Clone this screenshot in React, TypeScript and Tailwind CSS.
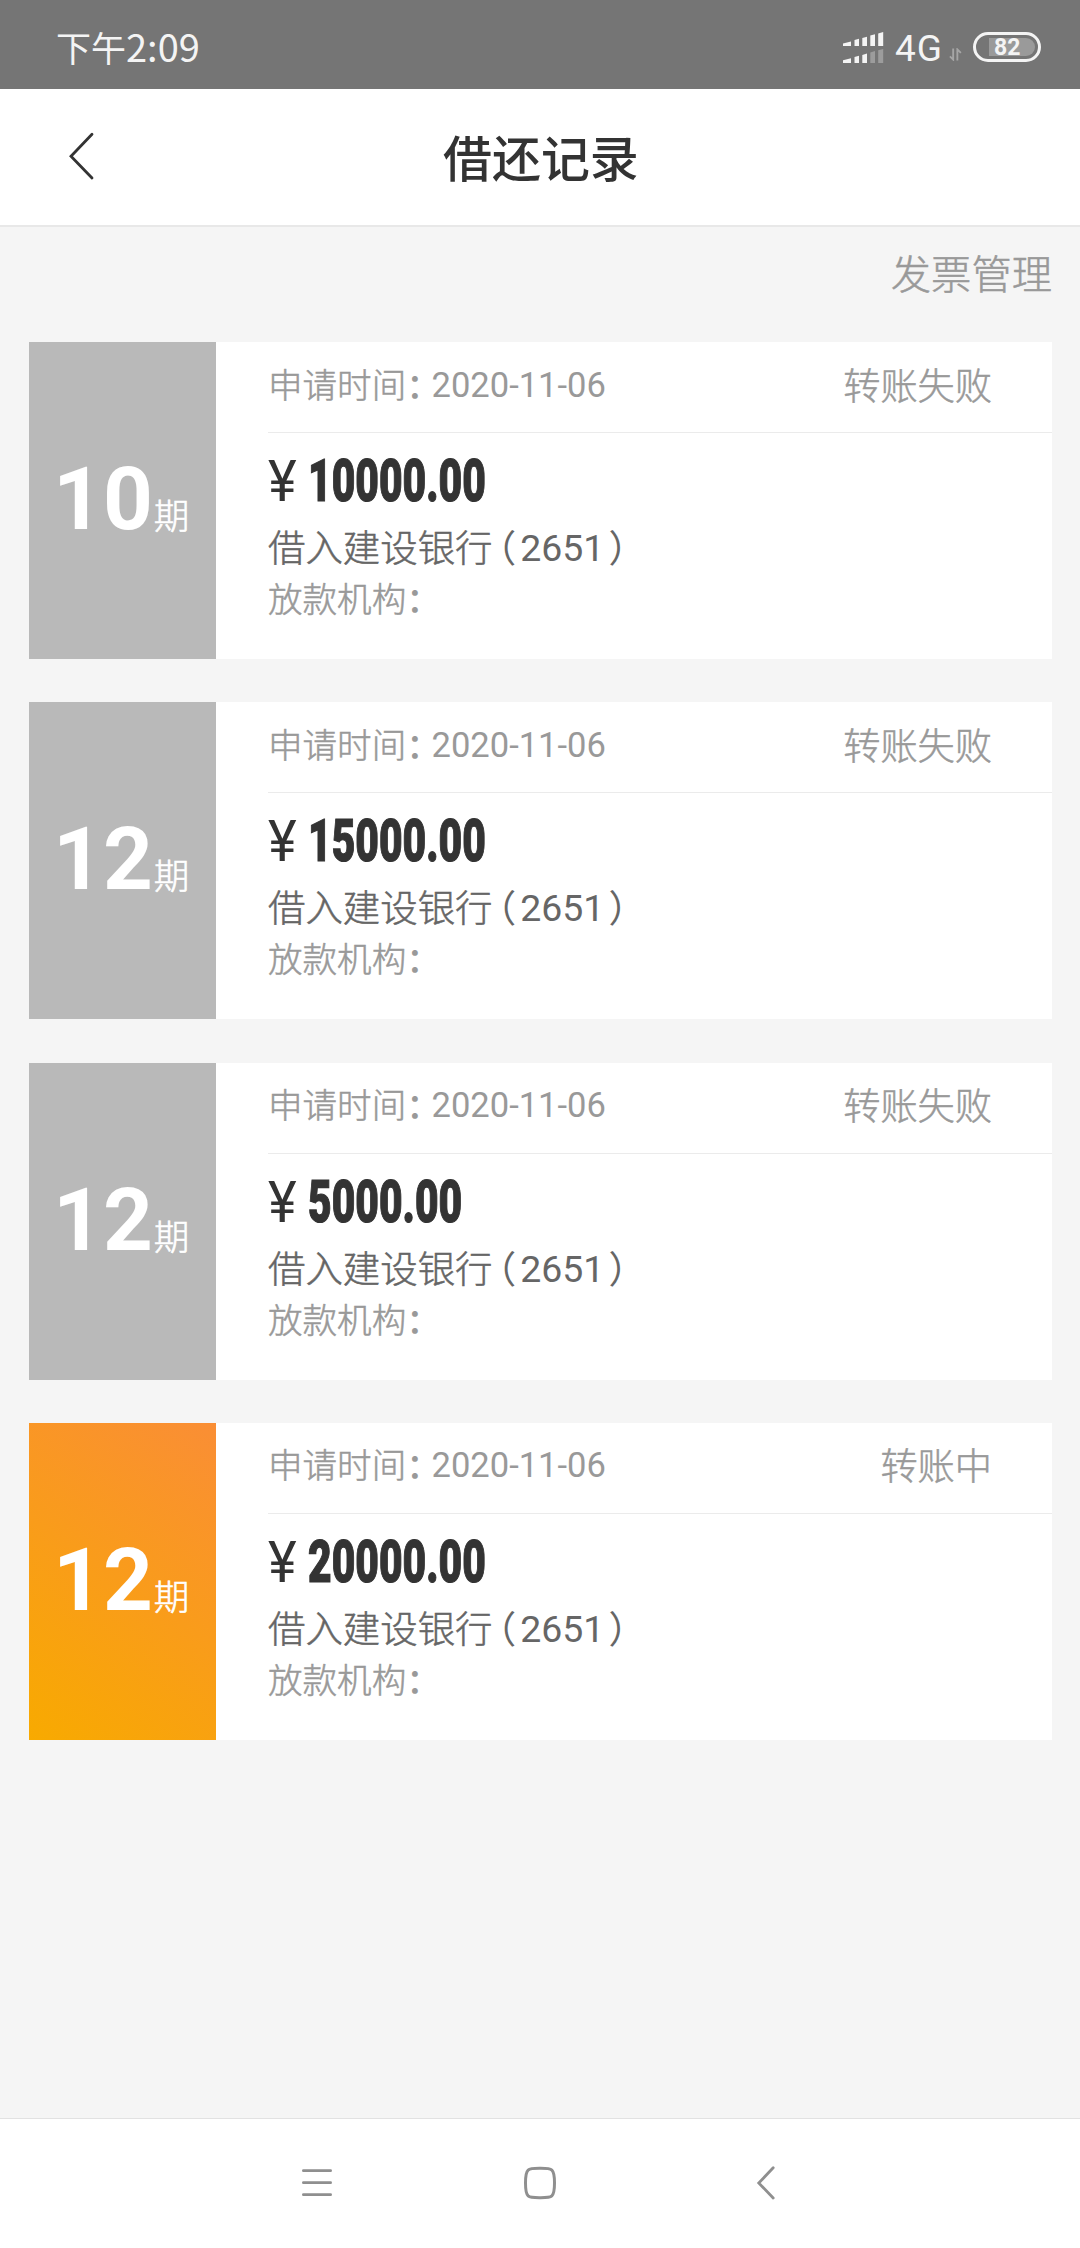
type LoanRecord = {
  periods: string;
  amount: string;
  status: string;
  active?: boolean;
};

const records: LoanRecord[] = [
  { periods: "10", amount: "10000.00", status: "转账失败" },
  { periods: "12", amount: "15000.00", status: "转账失败" },
  { periods: "12", amount: "5000.00", status: "转账失败" },
  { periods: "12", amount: "20000.00", status: "转账中", active: true },
];

function SignalIcon() {
  return (
    <svg width="42" height="32" viewBox="0 0 42 32" fill="#f4f4f4">
      <path d="M0 11.5 L8 9.5 V14 H0Z M11.5 8 L16 6.7 V14 H11.5Z M19.3 6 L24 4.7 V14 H19.3Z M27.3 3.6 L32 2.2 V14 H27.3Z M35.2 1.4 L40.2 0 V14 H35.2Z" />
      <path d="M0 28.3 L8 26.2 V31 H0Z M11.5 25 L16 23.7 V31 H11.5Z M19.3 23 L24 21.6 V31 H19.3Z" />
      <path fill="#9c9c9c" d="M27.3 20.4 L32 19 V31 H27.3Z M35.2 18.3 L40.2 17 V31 H35.2Z" />
    </svg>
  );
}

function StatusBar() {
  return (
    <div className="flex h-[89px] shrink-0 items-start bg-[#757575] text-[#f4f4f4]">
      <div className="ml-[56px] mt-[20px] text-[35px] leading-[52px]">
        下午<span className="text-[38px]">2:09</span>
      </div>
      <div className="ml-auto mr-[39px] mt-[32px] flex items-start">
        <SignalIcon />
        <span className="ml-[10px] mt-[-4px] w-[54px] font-[Roboto] text-[37px] leading-[42px] tracking-[1px]">4G</span>
        <svg className="mr-[2px] mt-[16px]" width="13" height="13" viewBox="0 0 14 13" fill="none" stroke="#a6a6a6" strokeWidth="2">
          <path d="M4.5 0 V12 L1 8.5 M9 13 V1 L12.8 4.8" />
        </svg>
        <div className="ml-[9px] flex h-[30px] w-[68px] items-center rounded-full border-[3px] border-[#f4f4f4] pl-[13px]">
          <div className="flex h-[18px] w-[46px] items-center rounded-r-full bg-[#9a9a9a] pl-[5px] pt-px font-[Roboto] text-[23px] leading-[18px] font-bold">
            82
          </div>
        </div>
      </div>
    </div>
  );
}

function Header() {
  return (
    <header className="flex h-[138px] shrink-0 items-start border-b-2 border-[#e8e8e8] bg-white">
      <svg className="ml-[67px] mt-[42px]" width="28" height="50" viewBox="0 0 28 50" fill="none" stroke="#333" strokeWidth="2.8" strokeLinecap="round">
        <path d="M25 3.3 L4 25.3 L25 47" />
      </svg>
      <h1 className="ml-[348px] mt-[32px] text-[48.96px] leading-[70px] font-medium text-[#333]">借还记录</h1>
    </header>
  );
}

function RecordCard({ record }: { record: LoanRecord }) {
  const tile = record.active ? "bg-linear-[35deg,#f8aa00,#fa8e35]" : "bg-[#b9b9b9]";
  return (
    <article className="flex h-[317px] bg-white">
      <div className={`flex w-[187px] shrink-0 items-baseline pl-[24px] pt-[105px] text-white ${tile}`}>
        <span className="font-[Roboto] text-[87px] leading-[104px] font-bold">{record.periods}</span>
        <span className="ml-px text-[35.5px] leading-[40px] font-light [-webkit-text-stroke:0.6px_white]">期</span>
      </div>
      <div className="ml-[52px] flex-1">
        <div className="flex h-[91px] items-center justify-between border-b border-[#ebebeb] pb-[7px]">
          <div className="flex text-[34.56px] leading-[50px] text-[#999]">
            <span className="font-light [-webkit-text-stroke:0.5px_#999]">申请时间</span>
            <span className="font-medium [font-feature-settings:'halt']">：</span>
            <span className="ml-[8px] mt-[2px] font-[Roboto]">2020-11-06</span>
          </div>
          <div className="pr-[60px] text-[37.2px] leading-[50px] font-light text-[#999] [-webkit-text-stroke:0.5px_#999]">{record.status}</div>
        </div>
        <div className="mt-[14px] flex h-[68px] items-center whitespace-nowrap text-[#333]">
          <span className="w-[40px] font-[Roboto] text-[58px] leading-[68px]">
            <span className="inline-block origin-left scale-x-[0.94]">¥</span>
          </span>
          <span className="inline-block origin-left scale-x-[0.68] font-[Roboto] text-[60px] leading-[68px] font-black [-webkit-text-stroke:1.2px_#333]">
            {record.amount}
          </span>
        </div>
        <div className="mt-[3px] flex h-[54px] text-[37.44px] leading-[56px] text-[#666]">
          <span className="font-light [-webkit-text-stroke:0.5px_#666]">借入建设银行</span>
          <span className="ml-[5px] [font-feature-settings:'halt']">（</span>
          <span className="ml-[4px] mt-[2px] font-[Roboto]">2651</span>
          <span className="ml-[4px] [font-feature-settings:'halt']">）</span>
        </div>
        <div className="flex text-[34.56px] leading-[50px] text-[#999]">
          <span className="font-light [-webkit-text-stroke:0.5px_#999]">放款机构</span>
          <span className="font-medium [font-feature-settings:'halt']">：</span>
        </div>
      </div>
    </article>
  );
}

function NavBar() {
  return (
    <nav className="flex h-[130px] shrink-0 items-start border-t border-[#e2e2e2] bg-white pt-[46px]">
      <svg className="ml-[300px]" width="34" height="36" viewBox="0 0 34 36" fill="none" stroke="#8f8f8f" strokeWidth="2.8" strokeLinecap="round">
        <path d="M3.4 5.7 H30.6 M3.4 17.7 H30.6 M3.4 29.7 H30.6" />
      </svg>
      <svg className="ml-[188px]" width="36" height="36" viewBox="0 0 36 36" fill="none" stroke="#8f8f8f" strokeWidth="3">
        <path d="M18 3.3 C30 3.3 32.5 3 32.5 18 C32.5 33 30 32.7 18 32.7 C6 32.7 3.5 33 3.5 18 C3.5 3 6 3.3 18 3.3Z" />
      </svg>
      <svg className="ml-[197px]" width="24" height="36" viewBox="0 0 24 36" fill="none" stroke="#8f8f8f" strokeWidth="2.8" strokeLinecap="round">
        <path d="M18.2 2.8 L3.8 18 L18.2 33" />
      </svg>
    </nav>
  );
}

export default function App() {
  return (
    <div className="flex h-[2248px] w-[1080px] flex-col overflow-hidden bg-[#f5f5f5] font-['Noto_Sans_CJK_SC',sans-serif]">
      <StatusBar />
      <Header />
      <main className="flex-1 pl-[29px] pr-[28px]">
        <div className="h-[115px] pt-[15px] text-right text-[40.3px] leading-[60px] font-light text-[#999] [-webkit-text-stroke:0.5px_#999]">发票管理</div>
        <div className="flex flex-col gap-[43.33px]">
          {records.map((record, index) => (
            <RecordCard key={index} record={record} />
          ))}
        </div>
      </main>
      <NavBar />
    </div>
  );
}
